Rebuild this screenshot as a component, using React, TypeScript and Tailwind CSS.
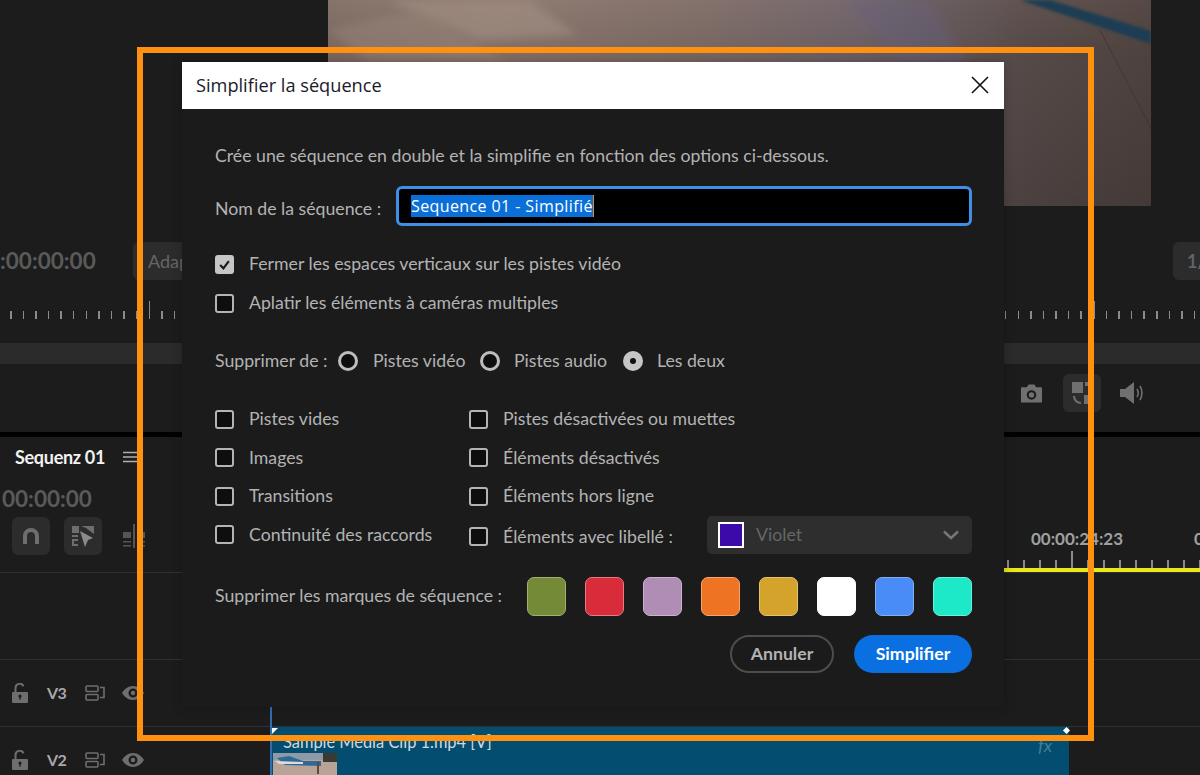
import type { ReactNode } from 'react';

const SWATCHES = [
    'bg-[#758a37] border-[#a3b070]',
    'bg-[#d92c3b] border-[#e87a82]',
    'bg-[#b08db5] border-[#cbb3cf]',
    'bg-[#ee7424] border-[#f4a672]',
    'bg-[#d4a32c] border-[#e2c26e]',
    'bg-white border-white',
    'bg-[#4a8cf7] border-[#86aee8]',
    'bg-[#1de9c8] border-[#6df0da]',
];

const BG_TICKS = Array.from({ length: 96 }, (_, i) => i);
const TL_TICKS = Array.from({ length: 13 }, (_, i) => i);

function Checkbox({ checked = false }: { checked?: boolean }) {
    if (checked) {
        return (
            <span className="flex h-[19px] w-[19px] shrink-0 items-center justify-center rounded-[3px] bg-[#c6c6c6]">
                <svg viewBox="0 0 12 12" className="h-[13px] w-[13px]">
                    <path d="M2 6.500 L5 9.500 L10 2.800" fill="none" stroke="#1a1a1a" strokeWidth="2" />
                </svg>
            </span>
        );
    }
    return <span className="h-[19px] w-[19px] shrink-0 rounded-[3px] border-[2.500px] border-[#b4b4b4] bg-[#0e0e0e]" />;
}

function CheckRow({ label, checked, className = '' }: { label: string; checked?: boolean; className?: string }) {
    return (
        <div className={`flex items-center gap-[15px] ${className}`}>
            <Checkbox checked={checked} />
            <span className="whitespace-nowrap">{label}</span>
        </div>
    );
}

function Radio({ on = false }: { on?: boolean }) {
    if (on) {
        return (
            <span className="flex h-[20px] w-[20px] shrink-0 items-center justify-center rounded-full bg-[#c6c6c6]">
                <span className="h-[6px] w-[6px] rounded-full bg-[#111]" />
            </span>
        );
    }
    return <span className="h-[20px] w-[20px] shrink-0 rounded-full border-[3px] border-[#bdbdbd] bg-[#0e0e0e]" />;
}

function TrackHead({ name }: { name: string }) {
    return (
        <div className="flex h-[66px] w-[270px] shrink-0 items-center pl-[11px] text-[#6e6e6e]">
            <svg viewBox="0 0 18 20" className="h-[20px] w-[18px]" fill="currentColor">
                <path d="M2 9h14a1 1 0 0 1 1 1v9a1 1 0 0 1-1 1H2a1 1 0 0 1-1-1v-9a1 1 0 0 1 1-1z" />
                <path d="M4.500 9V5a4.200 4.200 0 0 1 8-1.800" fill="none" stroke="currentColor" strokeWidth="2" />
                <circle cx="9" cy="13" r="1.600" fill="#1c1c1c" />
                <rect x="8.300" y="13" width="1.400" height="3.500" fill="#1c1c1c" />
            </svg>
            <span className="ml-[18px] w-[20px] text-[16px] font-bold tracking-[-0.5px] text-[#a8a8a8]">{name}</span>
            <svg viewBox="0 0 20 16" className="ml-[18px] h-[16px] w-[20px]" fill="none" stroke="currentColor" strokeWidth="1.600">
                <rect x="1" y="1" width="12" height="5.500" rx="1" />
                <rect x="1" y="9.500" width="12" height="5.500" rx="1" />
                <path d="M15 2.500h4v10h-4" />
            </svg>
            <svg viewBox="0 0 22 14" className="ml-[17px] h-[14px] w-[22px]" fill="currentColor">
                <path fillRule="evenodd" d="M11 0C6 0 2 3.500 0 7c2 3.500 6 7 11 7s9-3.500 11-7c-2-3.500-6-7-11-7zm0 2.500a4.500 4.500 0 1 1 0 9 4.500 4.500 0 0 1 0-9z" />
                <circle cx="11" cy="7" r="2.200" />
            </svg>
        </div>
    );
}

function IconBox({ children }: { children: ReactNode }) {
    return (
        <span className="flex h-[38px] w-[38px] items-center justify-center rounded-[6px] bg-[#2c2c2c]">{children}</span>
    );
}

function Photo() {
    return (
        <svg viewBox="0 0 823 206" preserveAspectRatio="none" className="block h-[206px] w-[823px]">
            <defs>
                <linearGradient id="ph" x1="0" y1="0" x2="1" y2="0">
                    <stop offset="0" stopColor="#86736a" />
                    <stop offset="0.2" stopColor="#907c72" />
                    <stop offset="0.45" stopColor="#84726c" />
                    <stop offset="0.65" stopColor="#75686e" />
                    <stop offset="0.85" stopColor="#5f5250" />
                    <stop offset="1" stopColor="#564945" />
                </linearGradient>
                <linearGradient id="fade" x1="0" y1="0" x2="0" y2="1">
                    <stop offset="0" stopColor="#000" stopOpacity="0" />
                    <stop offset="0.25" stopColor="#000" stopOpacity="0.1" />
                    <stop offset="1" stopColor="#000" stopOpacity="0.22" />
                </linearGradient>
                <filter id="soft">
                    <feGaussianBlur stdDeviation="4" />
                </filter>
                <filter id="tight">
                    <feGaussianBlur stdDeviation="1.500" />
                </filter>
            </defs>
            <rect width="823" height="206" fill="url(#ph)" />
            <rect width="823" height="206" fill="url(#fade)" />
            <path d="M60 0 L200 0 L250 35 L150 40 Z" fill="#a89488" opacity="0.5" filter="url(#soft)" />
            <path d="M0 30 L90 10 L180 62 L40 62 Z" fill="#9a867a" opacity="0.45" filter="url(#soft)" />
            <path d="M520 0 L600 0 L640 62 L570 62 Z" fill="#66607a" opacity="0.45" filter="url(#soft)" />
            <path d="M692 0 L722 0 L823 31 L823 44 Z" fill="#1a3c52" filter="url(#tight)" />
            <path d="M823 128 L772 30" stroke="#3d3230" strokeWidth="1" fill="none" opacity="0.7" />
        </svg>
    );
}

export default function App() {
    return (
        <div className="relative flex h-[775px] w-[1200px] flex-col overflow-hidden bg-[#1c1c1c] font-['Lato','Open_Sans',sans-serif]">
            {/* programme monitor */}
            <div className="h-[206px] shrink-0 pl-[328px]">
                <Photo />
            </div>
            <div className="h-[36px] shrink-0" />
            <div className="flex h-[38px] shrink-0 items-center justify-between">
                <div className="flex items-center">
                    <span className="w-[133px] text-[22.500px] font-bold leading-none whitespace-nowrap text-[#5a5a5a]">:00:00:00</span>
                    <span className="flex h-[38px] w-[80px] items-center rounded-[6px] bg-[#2c2c2c] pl-[15px] text-[18px] text-[#666]">Adap</span>
                </div>
                <span className="flex h-[38px] w-[27px] items-center rounded-l-[6px] bg-[#2c2c2c] pl-[14px] text-[18px] font-bold text-[#5f6468]">1/</span>
            </div>
            <div className="flex h-[63px] shrink-0 items-start pt-[31px]">
                <div className="ml-[10px] flex items-end">
                    {BG_TICKS.map(i => (
                        <span key={i} className="flex h-[8px] w-[12.600px] shrink-0 items-end">
                            <span className={`w-[1.500px] bg-[#8c8c8c] ${i === 11 || i === 86 ? 'h-[18px]' : 'h-[8px]'}`} />
                        </span>
                    ))}
                </div>
            </div>
            <div className="h-[21px] shrink-0 bg-[#2b2b2b]" />
            <div className="flex h-[68px] shrink-0 items-start justify-end pt-[10px] pr-[55px] text-[#707070]">
                <div className="flex items-center">
                    <svg viewBox="0 0 24 20" className="h-[20px] w-[23px]" fill="currentColor">
                        <path fillRule="evenodd" d="M2 4h5l2-3h6l2 3h5a1 1 0 0 1 1 1v14a1 1 0 0 1-1 1H2a1 1 0 0 1-1-1V5a1 1 0 0 1 1-1zm10 3a5 5 0 1 0 0 10 5 5 0 0 0 0-10zm0 2.200a2.800 2.800 0 1 1 0 5.600 2.800 2.800 0 0 1 0-5.600z" />
                    </svg>
                    <span className="ml-[20px]">
                        <IconBox>
                            <svg viewBox="0 0 24 24" className="h-[24px] w-[24px]" fill="currentColor">
                                <rect x="2" y="1" width="11" height="11" />
                                <rect x="15" y="1" width="4" height="4" />
                                <rect x="14" y="14" width="8" height="9" />
                                <path d="M4 15c0 4 3 7 7 7" fill="none" stroke="currentColor" strokeWidth="2" />
                            </svg>
                        </IconBox>
                    </span>
                    <svg viewBox="0 0 26 24" className="ml-[18px] h-[24px] w-[26px]" fill="currentColor">
                        <path d="M1 8h5l9-7v22l-9-7H1z" />
                        <path d="M18 8c1.500 2.500 1.500 5.500 0 8M21 5c2.500 4 2.500 10 0 14" fill="none" stroke="currentColor" strokeWidth="1.600" />
                    </svg>
                </div>
            </div>
            <div className="h-[5px] shrink-0 bg-black" />

            {/* timeline head */}
            <div className="flex h-[135px] shrink-0 justify-between">
                <div className="flex flex-col">
                    <div className="mt-[8px] flex h-[24px] items-center pl-[15px]">
                        <span className="text-[18px] font-bold tracking-[-0.3px] text-[#f2f2f2]">Sequenz 01</span>
                        <svg viewBox="0 0 14 12" className="ml-[18px] h-[12px] w-[14px]" stroke="#b0b0b0" strokeWidth="1.500">
                            <path d="M0 1.500h14M0 6h14M0 10.500h14" />
                        </svg>
                    </div>
                    <span className="mt-[17px] ml-[2px] text-[22.500px] font-bold leading-[26px] text-[#5a5a5a]">00:00:00</span>
                    <div className="mt-[5px] ml-[12px] flex items-center gap-[14px] text-[#6e6e6e]">
                        <IconBox>
                            <svg viewBox="0 0 18 18" className="h-[18px] w-[18px]" fill="none" stroke="currentColor" strokeWidth="4">
                                <path d="M3 17V9a6 6 0 0 1 12 0v8" />
                            </svg>
                        </IconBox>
                        <IconBox>
                            <svg viewBox="0 0 24 24" className="h-[24px] w-[24px]" fill="currentColor">
                                <rect x="1" y="2" width="7" height="7" />
                                <rect x="1" y="11" width="6" height="2" />
                                <path d="M1 15h6v2H3v3h4v2H1z" />
                                <path d="M10 2h13v8L15 4z" />
                                <path d="M9 7l13 7-5 2-3 7z" fill="#8a8a8a" />
                            </svg>
                        </IconBox>
                        <svg viewBox="0 0 24 24" className="ml-[6px] h-[24px] w-[24px]" fill="currentColor" opacity="0.7">
                            <rect x="11" y="0" width="2" height="24" />
                            <rect x="1" y="8" width="8" height="6" />
                            <rect x="15" y="8" width="8" height="6" />
                            <path d="M1 17h8v1.500H1zM15 17h8v1.500h-8zM1 21h8v1.500H1zM15 21h8v1.500h-8z" />
                        </svg>
                    </div>
                </div>
                <div className="flex w-[196px] flex-col">
                    <div className="mt-[90px] flex h-[24px] items-center text-[17px] font-bold text-[#a0a0a0]">
                        <span className="ml-[27px] whitespace-nowrap">00:00:24:23</span>
                        <span className="ml-[71px]">0</span>
                    </div>
                    <div className="flex h-[18px] items-end pl-[3px]">
                        {TL_TICKS.map(i => (
                            <span key={i} className="flex h-[17px] w-[16px] shrink-0 items-end">
                                <span className={`w-[1.500px] bg-[#8c8c8c] ${i === 4 ? 'h-[17px]' : 'h-[8px]'}`} />
                            </span>
                        ))}
                    </div>
                    <div className="h-[4px] shrink-0 bg-[#e8e81c]" />
                </div>
            </div>

            {/* tracks */}
            <div className="h-[88px] shrink-0 border-t-[1px] border-b-[1px] border-[#303030]" />
            <div className="flex h-[66px] shrink-0 items-center">
                <TrackHead name="V3" />
            </div>
            <div className="flex h-[49px] shrink-0 border-t-[1px] border-[#303030]">
                <TrackHead name="V2" />
                <div className="relative h-[48px] w-[799px] border-l-[2px] border-[#2f6fb0] bg-[#024d70]">
                    <span className="absolute top-[5px] left-[11px] text-[16.400px] leading-[20px] whitespace-nowrap text-[#d0d8dc]">Sample Media Clip 1.mp4 [V]</span>
                    <svg viewBox="0 0 64 22" preserveAspectRatio="none" className="absolute bottom-0 left-[1px] h-[22px] w-[64px]">
                        <rect width="64" height="22" fill="#b8a396" />
                        <rect width="64" height="7" fill="#8f9aa8" />
                        <path d="M4 5 L16 3 L30 8 L48 8 L48 13 L12 12 Z" fill="#2f6a96" />
                        <path d="M2 8 L30 9 L30 11 L6 11 Z" fill="#d8dde2" />
                        <path d="M50 0 L64 0 L64 9 L50 9 Z" fill="#3a3a34" />
                        <rect x="44" y="9" width="2" height="12" fill="#5a4c44" />
                    </svg>
                    <span className="absolute top-[5px] right-[17px] text-[18px] italic text-[#3f7f9c]">fx</span>
                    <span className="absolute top-[1px] left-0 h-0 w-0 border-t-[6px] border-r-[6px] border-t-white border-r-transparent" />
                    <span className="absolute top-[1px] right-0 h-[5px] w-[5px] rotate-45 bg-white" />
                </div>
            </div>
            <span className="absolute top-[706px] left-[270px] h-[22px] w-[2px] bg-[#2f6fb0]" />

            {/* dialog */}
            <div className="absolute top-[62px] left-[182px] flex h-[645px] w-[822px] flex-col bg-[#1b1b1c] text-[17.700px] leading-[22px] text-[#b3b3b3] shadow-[0_0_10px_rgba(0,0,0,0.25)]">
                <div className="flex h-[47px] shrink-0 items-center justify-between bg-white pr-[15px] pb-[2px] pl-[14px]">
                    <span className="font-['Open_Sans',sans-serif] text-[18.200px] text-[#1a1a2a]">Simplifier la séquence</span>
                    <svg viewBox="0 0 18 18" className="h-[18px] w-[18px]" stroke="#111" strokeWidth="1.600">
                        <path d="M1 1 L17 17 M17 1 L1 17" />
                    </svg>
                </div>
                <div className="flex flex-col pr-[32px] pl-[33px]">
                    <p className="mt-[36px] whitespace-nowrap">Crée une séquence en double et la simplifie en fonction des options ci-dessous.</p>
                    <div className="mt-[19px] flex items-center justify-between">
                        <span className="translate-y-[3px] whitespace-nowrap">Nom de la séquence :</span>
                        <div className="flex h-[40px] w-[576px] items-center rounded-[6px] border-[3px] border-[#3f8fe6] bg-black pl-[12px]">
                            <span className="border-r-[1px] border-[#e08a30] bg-[#0a6fd8] font-['Open_Sans',sans-serif] text-[16px] leading-[22px] tracking-[0.4px] whitespace-nowrap text-white">
                                Sequence 01 - Simplifié
                            </span>
                        </div>
                    </div>
                    <CheckRow checked label="Fermer les espaces verticaux sur les pistes vidéo" className="mt-[27px]" />
                    <CheckRow label="Aplatir les éléments à caméras multiples" className="mt-[17px]" />
                    <div className="mt-[36px] flex items-center">
                        <span className="w-[123px] whitespace-nowrap">Supprimer de :</span>
                        <Radio />
                        <span className="ml-[15px] w-[107px] whitespace-nowrap">Pistes vidéo</span>
                        <Radio />
                        <span className="ml-[14px] w-[109px] whitespace-nowrap">Pistes audio</span>
                        <Radio on />
                        <span className="ml-[14px] whitespace-nowrap">Les deux</span>
                    </div>
                    <div className="mt-[36px] grid grid-cols-[254px_1fr] gap-y-[16.600px]">
                        <CheckRow label="Pistes vides" />
                        <CheckRow label="Pistes désactivées ou muettes" />
                        <CheckRow label="Images" />
                        <CheckRow label="Éléments désactivés" />
                        <CheckRow label="Transitions" />
                        <CheckRow label="Éléments hors ligne" />
                        <CheckRow label="Continuité des raccords" />
                        <div className="relative">
                            <CheckRow label="Éléments avec libellé :" className="translate-y-[2px]" />
                            <div className="absolute top-[-8px] left-[238px] flex h-[38px] w-[265px] items-center rounded-[5px] bg-[#2e2e2e] pr-[13px] pl-[11px]">
                                <span className="h-[26px] w-[26px] border-2 border-white bg-[#3b0aa8]" />
                                <span className="ml-[12px] text-[#666]">Violet</span>
                                <svg viewBox="0 0 16 10" className="ml-auto h-[10px] w-[16px]" fill="none" stroke="#777" strokeWidth="2.500">
                                    <path d="M1 1.500 L8 8 L15 1.500" />
                                </svg>
                            </div>
                        </div>
                    </div>
                    <div className="mt-[31px] flex items-center justify-between">
                        <span className="whitespace-nowrap">Supprimer les marques de séquence :</span>
                        <div className="flex gap-[19px]">
                            {SWATCHES.map(s => (
                                <span key={s} className={`h-[39px] w-[39px] rounded-[7px] border-[1.500px] ${s}`} />
                            ))}
                        </div>
                    </div>
                    <div className="mt-[19px] flex justify-end gap-[20px] font-bold">
                        <span className="flex h-[38px] w-[104px] items-center justify-center rounded-full border-2 border-[#4d4d4d]">Annuler</span>
                        <span className="flex h-[38px] w-[118px] items-center justify-center rounded-full bg-[#0a6fe0] text-white">Simplifier</span>
                    </div>
                </div>
            </div>

            {/* orange annotation frame */}
            <div className="pointer-events-none absolute top-[47px] left-[137px] h-[694px] w-[957px] border-[6px] border-[#ff9010]" />
        </div>
    );
}
